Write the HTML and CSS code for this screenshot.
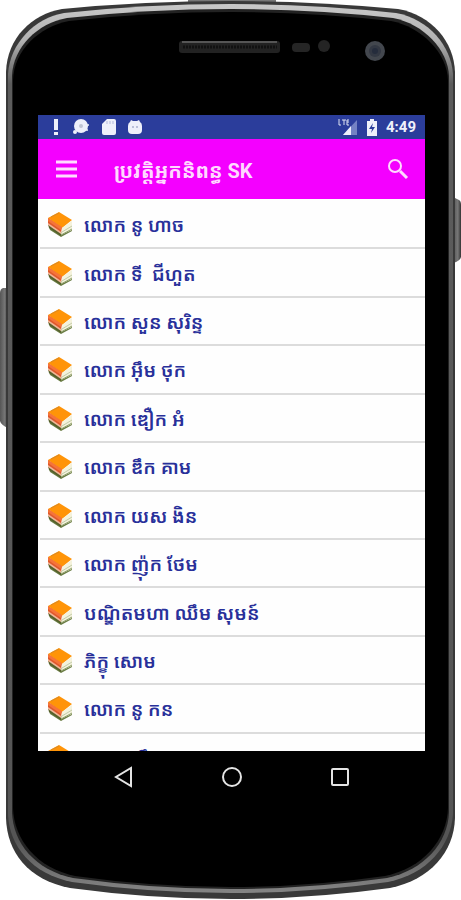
FILE: index.html
```html
<!DOCTYPE html>
<html lang="km">
<head>
<meta charset="UTF-8" />
<meta name="viewport" content="width=device-width, initial-scale=1" />
<title>ប្រវត្តិអ្នកនិពន្ធ SK</title>
<link rel="stylesheet" href="styles.css">
</head>

<body>
<!-- shared book icon -->
<svg class="symbols" aria-hidden="true">
  <symbol id="book" viewBox="0 0 26 26">
    <path d="M2 15 L3 18 L14 25 L25 19 L25 16 L14 20Z" fill="#6b7d45"/>
    <path d="M1 6 L1 13 L14 23 L15 15Z" fill="#e0582c"/>
    <path d="M1 12 L2 16 L14 24 L14 21Z" fill="#54602a"/>
    <path d="M1 11 L14 20 L14 22 L1 13Z" fill="#f0b698"/>
    <path d="M12 0 L25 8 L15 16 L1 6Z" fill="#ff9408"/>
    <path d="M1 6 L15 15 L14 18 L1 9Z" fill="#f5743a"/>
    <path d="M15 16 L25 9 L25 18 L14 23Z" fill="#f4f2dc"/>
    <path d="M15 20 L25 14" stroke="#c3cca9" fill="none"/>
    <path d="M14 23 L25 17" stroke="#8fa06c" fill="none"/>
    <path d="M12 1 L4 5" stroke="#d98a24"/>
  </symbol>
</svg>

<div class="phone">
  <svg class="phone-frame" viewBox="0 0 461 900" preserveAspectRatio="none" aria-hidden="true">
    <defs>
      <linearGradient id="rim" x1="0" y1="0" x2="0" y2="1">
        <stop offset="0" stop-color="#c8c8c8"/>
        <stop offset="0.04" stop-color="#b4b4b4"/>
        <stop offset="0.09" stop-color="#5c5c5c"/>
        <stop offset="0.94" stop-color="#555"/>
        <stop offset="1" stop-color="#858585"/>
      </linearGradient>
      <linearGradient id="key" x1="0" y1="0" x2="1" y2="0">
        <stop offset="0" stop-color="#555"/>
        <stop offset="0.6" stop-color="#777"/>
        <stop offset="1" stop-color="#333"/>
      </linearGradient>
    </defs>
    <path d="M8 288 H3 Q0 289 0 293 V421 Q1 425 8 428Z" fill="url(#key)"/>
    <path d="M453 197 L459 200 Q461 201 461 205 V257 Q460 261 453 263Z" fill="url(#key)"/>
    <path d="M188 0 H276 V6 H188Z" fill="#777"/>
    <path d="M6 72 C7 38 32 14 62 9 Q145 1 231 1 Q316 1 398 9 C432 15 454 42 455 72 V818 C454 852 430 880 390 888 Q310 899 231 899 Q150 899 70 888 C28 880 7 852 6 818Z" fill="#393939"/>
    <path d="M8 74 C10 43 35 18 64 13 Q146 4 231 4 Q315 4 396 13 C429 19 451 46 453 74 V814 C451 846 427 874 388 882 Q310 893 231 893 Q150 893 72 882 C32 874 9 846 8 814Z" fill="url(#rim)"/>
    <path d="M12 76 C13 47 38 23 67 18 Q148 9 231 9 Q314 9 393 18 C424 24 448 50 449 76 V812 C448 843 424 870 387 878 Q308 889 231 889 Q152 889 73 878 C35 870 13 843 12 812Z" fill="#222"/>
    <path d="M13 80 C14 50 39 27 69 21 Q149 12 231 12 Q312 12 391 21 C422 27 447 53 448 80 V808 C447 840 423 868 385 876 Q308 887 231 887 Q152 887 75 876 C37 868 14 840 13 808Z" fill="#000"/>
    <rect x="179" y="41" width="101" height="12" rx="3" fill="#222"/>
    <path d="M182 42 H277" stroke="#555" stroke-width="2"/>
    <path d="M183 47 H277" stroke="#111" stroke-width="3" stroke-dasharray="2 1"/>
    <rect x="292" y="43" width="18" height="9" rx="4" fill="#252525"/>
    <circle cx="324" cy="46" r="6" fill="#242424"/>
    <circle cx="375" cy="51" r="10" fill="#43474e"/>
    <circle cx="375" cy="51" r="6" fill="#333843"/>
    <circle cx="375" cy="51" r="3" fill="#252c3c"/>
  </svg>

  <main class="screen">
    <div class="status-bar">
      <div class="status-group notices">
        <svg width="8" height="18" viewBox="0 0 8 18"><path d="M2 1 H6 V12 H2Z M2 14 H6 V17 H2Z"/></svg>
        <svg width="18" height="16" viewBox="0 0 18 16"><circle cx="9" cy="7" r="7"/><circle cx="3" cy="13" r="2"/><circle cx="16" cy="6" r="1"/><circle cx="15" cy="11" r="1"/><circle cx="9" cy="7" r="2" fill="#c0c5d4"/></svg>
        <svg width="14" height="16" viewBox="0 0 14 16"><path d="M5 0 H12 Q14 0 14 2 V14 Q14 16 12 16 H2 Q0 16 0 14 V5Z"/><path d="M5 2 V5 M8 2 V5 M11 2 V5" stroke="#b4badb"/></svg>
        <svg width="14" height="16" viewBox="0 0 14 16"><path d="M3 1 L5 2 H9 L11 1 L12 3 Q14 4 14 7 V11 Q14 15 10 15 H4 Q0 15 0 11 V7 Q0 4 2 3Z"/><circle cx="5" cy="8" r="1" fill="#a9b0cf"/><circle cx="9" cy="8" r="1" fill="#a9b0cf"/></svg>
      </div>
      <div class="status-group">
        <svg width="20" height="18" viewBox="0 0 20 18"><path d="M19 2 V17 H5Z" fill="#7482c4"/><path d="M13 8 V17 H5Z"/><path d="M1 1 V7 H3 M4 2 H8 M6 2 V7 M11 2 H9 V7 H11 M9 4 H11" fill="none" stroke="#dfe2f2"/></svg>
        <svg width="12" height="17" viewBox="0 0 12 17"><path d="M4 0 H8 V2 H11 V17 H1 V2 H4Z"/><path d="M7 4 L3 10 H6 L5 14 L9 8 H6Z" fill="#2b3d9b"/></svg>
        <span class="clock">4:49</span>
      </div>
    </div>

    <header class="toolbar">
      <button class="icon-btn" aria-label="Menu">
        <svg width="22" height="18" viewBox="0 0 22 18"><path d="M0 2 H21 M0 9 H21 M0 16 H21" stroke="#ffd9ff" stroke-width="3"/></svg>
      </button>
      <h1 class="title">ប្រវត្តិអ្នកនិពន្ធ SK</h1>
      <button class="icon-btn" aria-label="Search">
        <svg width="22" height="22" viewBox="0 0 22 22" fill="none" stroke="#ffd9ff"><circle cx="8" cy="8" r="6" stroke-width="2"/><path d="M13 13 L20 20" stroke-width="3"/></svg>
      </button>
    </header>

    <div class="list-view">
      <ul class="authors">
        <li><a href="#"><svg class="book"><use href="#book"/></svg>លោក នូ ហាច</a></li>
        <li><a href="#"><svg class="book"><use href="#book"/></svg>លោក ទី&nbsp; ជីហួត</a></li>
        <li><a href="#"><svg class="book"><use href="#book"/></svg>លោក សួន សុរិន្ទ</a></li>
        <li><a href="#"><svg class="book"><use href="#book"/></svg>លោក អ៊ឹម ថុក</a></li>
        <li><a href="#"><svg class="book"><use href="#book"/></svg>លោក ឌឿក អំ</a></li>
        <li><a href="#"><svg class="book"><use href="#book"/></svg>លោក ឌឹក គាម</a></li>
        <li><a href="#"><svg class="book"><use href="#book"/></svg>លោក យស ងិន</a></li>
        <li><a href="#"><svg class="book"><use href="#book"/></svg>លោក ញ៉ុក ថែម</a></li>
        <li><a href="#"><svg class="book"><use href="#book"/></svg>បណ្ឌិតមហា ឈឹម សុមន៍</a></li>
        <li><a href="#"><svg class="book"><use href="#book"/></svg>ភិក្ខុ សោម</a></li>
        <li><a href="#"><svg class="book"><use href="#book"/></svg>លោក នូ កន</a></li>
        <li><a href="#"><svg class="book"><use href="#book"/></svg>លោក យឹម</a></li>
      </ul>
    </div>

    <nav class="nav-bar">
      <button class="icon-btn" aria-label="Back"><svg width="24" height="24" viewBox="0 0 24 24"><path d="M19 3 V21 L4 12Z"/></svg></button>
      <button class="icon-btn" aria-label="Home"><svg width="24" height="24" viewBox="0 0 24 24"><circle cx="12" cy="12" r="9"/></svg></button>
      <button class="icon-btn" aria-label="Recent apps"><svg width="24" height="24" viewBox="0 0 24 24"><rect x="4" y="4" width="16" height="16" rx="1"/></svg></button>
    </nav>
  </main>
</div>
</body>
</html>
```

FILE: styles.css
```css
* { box-sizing: border-box; margin: 0; padding: 0; }
body {
  font-family: Roboto, "Noto Sans Khmer", "Khmer OS", "DejaVu Sans", sans-serif;
  background: #fff;
}
.symbols { position: absolute; width: 0; height: 0; }

/* Phone */
.phone {
  position: relative;
  min-height: 100vh;
  padding: 115px 36px 96px 38px;
}
.phone-frame {
  position: absolute; top: 0; left: 0;
  width: 100%; height: 100%;
}
.screen { position: relative; background: #000; }

/* Status bar */
.status-bar {
  display: flex; justify-content: space-between; align-items: center;
  height: 24px; padding: 0 9px 0 14px;
  background: #2b3d9b; color: #eef0fa;
}
.status-bar svg { fill: #eef0fa; }
.status-group { display: flex; align-items: center; gap: 8px; }
.notices { gap: 12px; }
.clock { font-size: 15px; font-weight: 700; }

/* Toolbar */
.toolbar {
  display: flex; align-items: center;
  height: 60px; padding: 0 16px 0 18px;
  background: #f400ff;
}
.title {
  flex: 1; padding: 4px 0 0 36px;
  font-size: 20px; font-weight: 700; line-height: 32px;
  color: #ffd9ff; white-space: nowrap;
}
.icon-btn {
  display: flex; background: none; border: 0;
  cursor: pointer;
}

/* List */
.list-view { height: 552px; overflow: hidden; background: #fefefe; }
.authors {
  display: grid; grid-template-rows: repeat(12, 1fr);
  height: 583px; padding-top: 2px; list-style: none;
}
.authors li { border-bottom: 2px solid #dcdcdc; margin-left: 2px; }
.authors a {
  display: flex; align-items: center; gap: 11px;
  height: 100%; padding: 4px 0 0 7px;
  font-size: 19px; font-weight: 600; line-height: 32px;
  color: #28309a; text-decoration: none; white-space: nowrap;
}
.book { width: 26px; height: 26px; margin-bottom: 2px; }

/* Navigation keys */
.nav-bar {
  display: flex; justify-content: center; align-items: center; gap: 84px;
  height: 52px;
}
.nav-bar svg { fill: none; stroke: #e4e4e4; stroke-width: 2; }
```
